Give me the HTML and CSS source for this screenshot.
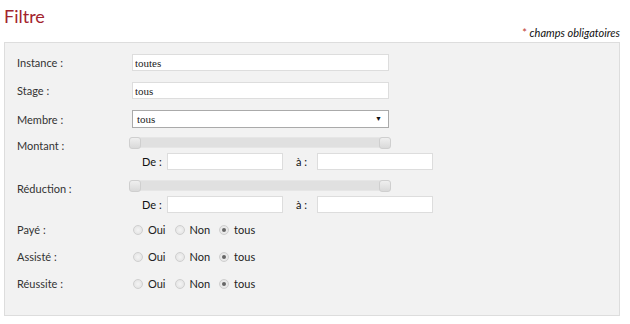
FILE: index.html
```html
<!DOCTYPE html>
<html lang="fr">
  <head>
    <meta charset="UTF-8">
    <title>Filtre</title>
    <link rel="stylesheet" href="styles.css">
  </head>
  <body>
    <h2 class="title">Filtre</h2>
    <p class="required"><span class="star">*</span> champs obligatoires</p>

    <div class="box">
      <div class="row">
        <label class="lbl">Instance :</label>
        <input class="txt" type="text" value="toutes">
      </div>
      <div class="row">
        <label class="lbl">Stage :</label>
        <input class="txt" type="text" value="tous">
      </div>
      <div class="row row-select">
        <label class="lbl">Membre :</label>
        <div class="select"><span>tous</span><span class="arrow">&#9660;</span></div>
      </div>

      <!-- montant -->
      <div class="row range">
        <label class="lbl">Montant :</label>
        <div class="range-body">
          <div class="slider"><span class="handle left"></span><span class="handle right"></span></div>
          <div class="fromto">
            <span class="sub">De :</span><input class="small" type="text">
            <span class="sub sub-a">à :</span><input class="small" type="text">
          </div>
        </div>
      </div>

      <!-- reduction -->
      <div class="row range">
        <label class="lbl">Réduction :</label>
        <div class="range-body">
          <div class="slider"><span class="handle left"></span><span class="handle right"></span></div>
          <div class="fromto">
            <span class="sub">De :</span><input class="small" type="text">
            <span class="sub sub-a">à :</span><input class="small" type="text">
          </div>
        </div>
      </div>

      <div class="row radios">
        <label class="lbl">Payé :</label>
        <label class="opt"><input type="radio" name="paye">Oui</label>
        <label class="opt"><input type="radio" name="paye">Non</label>
        <label class="opt"><input type="radio" name="paye" checked>tous</label>
      </div>
      <div class="row radios">
        <label class="lbl">Assisté :</label>
        <label class="opt"><input type="radio" name="assiste">Oui</label>
        <label class="opt"><input type="radio" name="assiste">Non</label>
        <label class="opt"><input type="radio" name="assiste" checked>tous</label>
      </div>
      <div class="row radios">
        <label class="lbl">Réussite :</label>
        <label class="opt"><input type="radio" name="reussite">Oui</label>
        <label class="opt"><input type="radio" name="reussite">Non</label>
        <label class="opt"><input type="radio" name="reussite" checked>tous</label>
      </div>
    </div>
  </body>
</html>
```
FILE: styles.css
```css
body {
  margin: 0;
  padding: 0 10px 0 4px;
  font-family: "Lato", "DejaVu Sans", sans-serif;
  font-size: 11px;
  color: #333;
  background: #fff;
}

.title {
  margin: 0;
  padding-top: 5px;
  height: 21px;
  font-size: 18px;
  font-weight: normal;
  color: #a3232e;
}

.required {
  margin: 0;
  height: 16px;
  text-align: right;
  font-style: italic;
  font-size: 11px;
  color: #111;
}

.required .star {
  color: #c0392b;
  font-style: normal;
}

.box {
  border: 1px solid #ddd;
  background: #f2f2f2;
  padding: 11px 0 25px 12px;
}

.row {
  display: flex;
  align-items: center;
  margin-bottom: 11px;
}

.lbl {
  width: 115px;
  flex: none;
}

.txt {
  width: 257px;
  height: 17px;
  box-sizing: border-box;
  border: 1px solid #ddd;
  background: #fff;
  padding: 0 2px;
  font-family: "Liberation Serif", serif;
  font-size: 11px;
  color: #222;
  outline: none;
}

.row-select {
  margin-bottom: 9px;
}

.select {
  width: 257px;
  height: 18px;
  box-sizing: border-box;
  border: 1px solid #aaa;
  background: #fff;
  display: flex;
  align-items: center;
  justify-content: space-between;
  padding: 0 6px 0 4px;
  font-family: "Liberation Serif", serif;
  font-size: 11px;
  color: #222;
}

.select .arrow {
  font-size: 7px;
  color: #111;
}

/* tranche de valeurs */
.range {
  align-items: flex-start;
  margin-bottom: 10px;
}

.range .lbl {
  padding-top: 2px;
}

.range-body {
  display: flex;
  flex-direction: column;
}

.slider {
  position: relative;
  width: 262px;
  height: 11px;
  margin-left: -3px;
  box-sizing: border-box;
  background: #e0e0e0;
  border: 1px solid #e6e6e6;
  border-radius: 4px;
}

.handle {
  position: absolute;
  top: -1px;
  width: 12px;
  height: 12px;
  box-sizing: border-box;
  border: 1px solid #cfcfcf;
  border-radius: 3px;
  background: linear-gradient(#efefef, #d9d9d9);
}

.handle.left {
  left: -1px;
}

.handle.right {
  right: -1px;
}

.fromto {
  display: flex;
  align-items: center;
  margin-top: 5px;
  padding-left: 10px;
}

.sub {
  width: 25px;
  color: #111;
}

.sub-a {
  width: 21px;
  margin-left: 13px;
}

.small {
  width: 116px;
  height: 17px;
  box-sizing: border-box;
  border: 1px solid #ddd;
  background: #fff;
  outline: none;
}

/* boutons radio */
.radios {
  margin-bottom: 14px;
  height: 13px;
}

.radios:last-child {
  margin-bottom: 0;
}

.opt {
  display: flex;
  align-items: center;
  margin-right: 8px;
  color: #222;
}

.opt input {
  appearance: none;
  -webkit-appearance: none;
  width: 10px;
  height: 10px;
  margin: 0 5px 0 1px;
  border: 1px solid #cfcfcf;
  border-radius: 50%;
  background: radial-gradient(circle, #f4f4f4, #e0e0e0);
  position: relative;
}

.opt input:checked::after {
  content: "";
  position: absolute;
  left: 2px;
  top: 2px;
  width: 4px;
  height: 4px;
  border-radius: 50%;
  background: #666;
}
```
